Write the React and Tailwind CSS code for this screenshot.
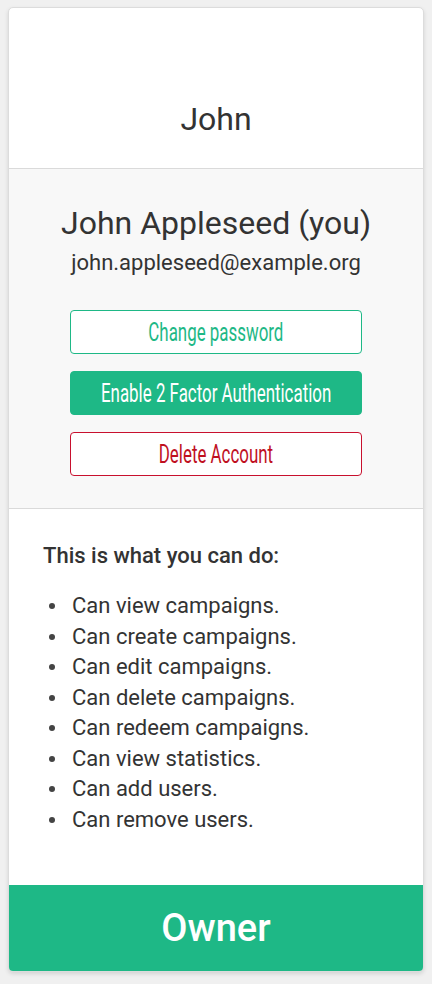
import React from "react";

const perms = [
  "Can view campaigns.",
  "Can create campaigns.",
  "Can edit campaigns.",
  "Can delete campaigns.",
  "Can redeem campaigns.",
  "Can view statistics.",
  "Can add users.",
  "Can remove users.",
];

function Btn({ className, children }) {
  return (
    <button className={"flex h-[44px] items-center justify-center overflow-hidden rounded-[4px] border " + className}>
      <span className="inline-block scale-x-[0.65] whitespace-nowrap text-[26px] leading-none font-normal">{children}</span>
    </button>
  );
}

export default function App() {
  return (
    <div className="min-h-[984px] bg-[#f0f0f0] px-[8px] pt-[7px] pb-[12px]" style={{ fontFamily: 'Roboto, "Noto Sans", sans-serif' }}>
      <div className="overflow-hidden rounded-[5px] border border-[#dcdcdc] bg-white shadow-[0_2px_4px_rgba(0,0,0,0.12)]">
        <div className="flex h-[160px] items-end justify-center pb-[30px]">
          <h2 className="text-[32px] leading-[38px] text-[#333333]">John</h2>
        </div>
        <div className="border-t border-b border-[#dadada] bg-[#f8f8f8] px-[16px] pt-[35px] pb-[32px] text-center">
          <div className="whitespace-nowrap text-[32px] leading-[38px] text-[#333333]">John Appleseed (you)</div>
          <div className="mt-[8px] whitespace-nowrap text-[22px] leading-[26px] text-[#333333]">john.appleseed@example.org</div>
          <div className="mx-[45px] mt-[34px] flex flex-col gap-[17px]">
            <Btn className="border-[#1eb886] bg-white text-[#1eb886]">Change password</Btn>
            <Btn className="border-[#1eb886] bg-[#1eb886] text-white">Enable 2 Factor Authentication</Btn>
            <Btn className="border-[#c8102e] bg-white text-[#c0101f]">Delete Account</Btn>
          </div>
        </div>
        <div className="px-[34px] pt-[33px] pb-[50px] text-[#333333]">
          <div className="text-[22px] font-medium leading-[28px]">This is what you can do:</div>
          <ul className="mt-[21px] text-[22px] leading-[30.5px]">
            {perms.map((p) => (
              <li key={p} className="flex items-center">
                <span className="ml-[6px] mr-[17px] inline-block h-[6px] w-[6px] rounded-full bg-[#444444]" />
                <span>{p}</span>
              </li>
            ))}
          </ul>
        </div>
        <div className="flex h-[86px] items-center justify-center bg-[#1eb886] text-[38px] font-medium text-white">
          Owner
        </div>
      </div>
    </div>
  );
}
